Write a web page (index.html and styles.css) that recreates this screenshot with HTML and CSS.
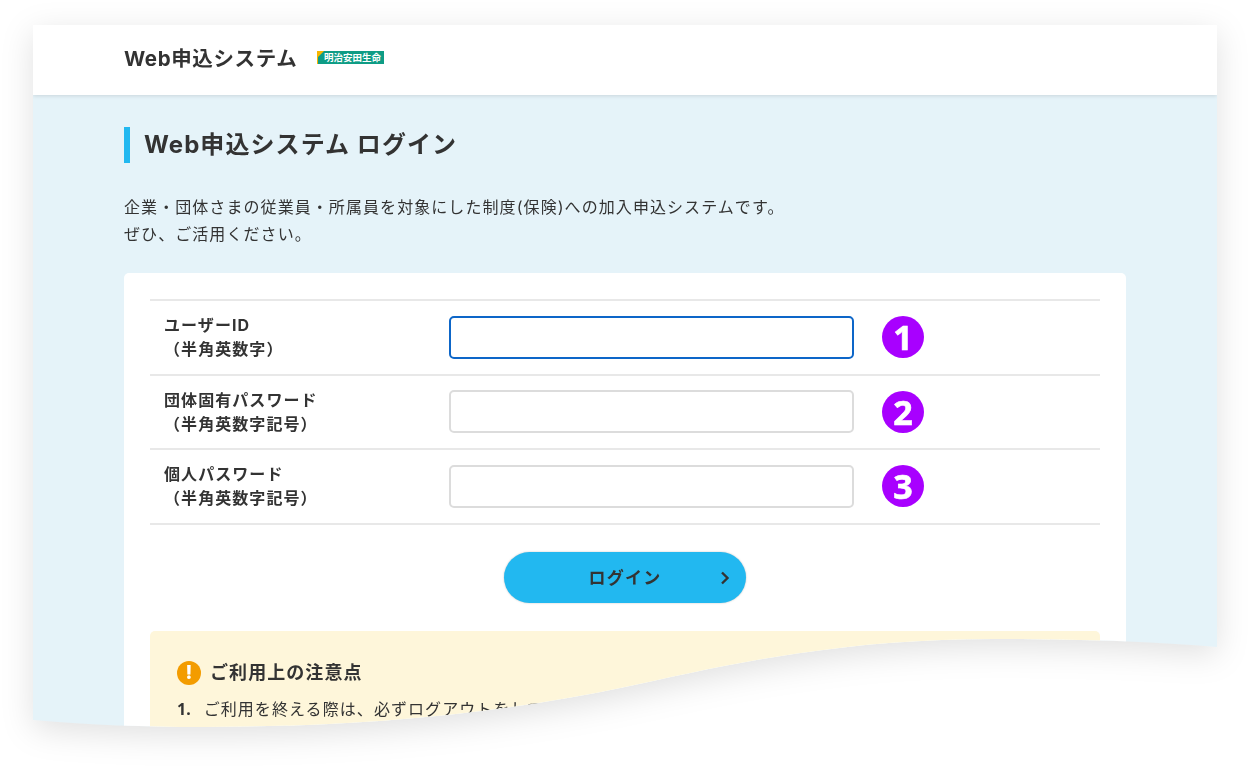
FILE: index.html
```html
<!DOCTYPE html>
<html lang="ja">
<head>
<meta charset="utf-8">
<title>Web申込システム ログイン</title>
<link rel="stylesheet" href="styles.css">
</head>
<body>
<div class="frame">
  <div class="sheet">
    <header class="topbar">
      <span class="brand">Web申込システム</span>
      <svg class="logo" width="67" height="13" viewBox="0 0 67 13">
        <rect width="67" height="13" fill="#0e9c85"/>
        <path d="M0 0H7L1 6V13H0Z" fill="#f7b500"/>
        <text x="7" y="10" class="logo-text">明治安田生命</text>
      </svg>
    </header>
    <main class="content">
      <h1 class="title">Web申込システム ログイン</h1>
      <p class="lead">企業・団体さまの従業員・所属員を対象にした制度(保険)への加入申込システムです。<br>ぜひ、ご活用ください。</p>
      <section class="card">
        <div class="rows">
          <div class="row">
            <label class="label">ユーザーID<br>（半角英数字）</label>
            <div class="input focused"></div>
            <span class="num">1</span>
          </div>
          <div class="row">
            <label class="label">団体固有パスワード<br>（半角英数字記号）</label>
            <div class="input"></div>
            <span class="num">2</span>
          </div>
          <div class="row">
            <label class="label">個人パスワード<br>（半角英数字記号）</label>
            <div class="input"></div>
            <span class="num">3</span>
          </div>
        </div>
        <div class="actions">
          <button class="login" type="button"><span class="login-text">ログイン</span>
            <svg class="chev" width="10" height="14" viewBox="0 0 10 14"><path d="M2 1.5L7.5 7L2 12.5" fill="none" stroke="#333" stroke-width="2.4"/></svg>
          </button>
        </div>
        <div class="notice">
          <h2 class="notice-title"><span class="bang">!</span>ご利用上の注意点</h2>
          <ol class="notice-list">
            <li><b class="marker">1.</b>ご利用を終える際は、必ずログアウトをしてください。</li>
          </ol>
        </div>
      </section>
    </main>
  </div>
</div>
</body>
</html>
```
FILE: styles.css
```css
* { box-sizing: border-box; }
html, body { margin: 0; height: 768px; overflow: hidden; background: #fff; }
body {
  font-family: Inter, "Noto Sans CJK JP", sans-serif;
  color: #333;
  letter-spacing: .067em;
}
.frame {
  width: 1184px;
  height: 710px;
  margin: 25px 0 0 33px;
  filter: drop-shadow(0 8px 16px rgba(0,0,0,.12));
}
.sheet {
  height: 710px;
  background: #e5f3f9;
  overflow: hidden;
  clip-path: path("M0 0H1184V622C1110 616 1040 614 960 614C840 614 740 629 620 656C470 690 320 702 170 702C110 702 60 700 0 695Z");
}
.topbar {
  height: 70px;
  background: #fff;
  box-shadow: 0 1px 4px rgba(0,0,0,.12);
  display: flex;
  align-items: center;
  padding: 0 0 6px 91px;
  gap: 20px;
  position: relative;
}
.brand { font-size: 20.5px; font-weight: 700; letter-spacing: .03em; }
.logo { display: block; margin-top: 1px; }
.logo-text { font-size: 9.5px; font-weight: 700; fill: #fff; letter-spacing: 0; }
.content { padding: 32px 91px 0; }
.title {
  margin: 0;
  height: 36px;
  border-left: 6px solid #22b8f0;
  padding-left: 14px;
  font-size: 24px;
  line-height: 36px;
  font-weight: 700;
}
.lead { margin: 31px 0 0; font-size: 16px; line-height: 27px; }
.card {
  margin-top: 25px;
  background: #fff;
  border-radius: 5px;
  padding: 26px 26px 0;
  height: 500px;
}
.rows { border-top: 2px solid #e8e8e8; }
.row {
  height: 74.5px;
  border-bottom: 2px solid #e8e8e8;
  display: flex;
  align-items: center;
  padding-left: 14px;
}
.label { width: 285px; font-size: 16px; line-height: 24px; font-weight: 700; }
.input {
  width: 405px;
  height: 43px;
  border: 2px solid #dcdcdc;
  border-radius: 5px;
  background: #fff;
}
.focused { border-color: #0d66c8; }
.num {
  width: 42px;
  height: 42px;
  margin-left: 28px;
  border-radius: 50%;
  background: #a800ff;
  color: #fff;
  display: flex;
  align-items: center;
  justify-content: center;
  font-family: "Open Sans", sans-serif;
  font-size: 34px;
  line-height: 42px;
  font-weight: 700;
  -webkit-text-stroke: .6px #fff;
  letter-spacing: 0;
}
.actions { display: flex; justify-content: center; margin-top: 27px; }
.login {
  width: 242px;
  height: 51px;
  border: 0;
  padding: 0 0 2px;
  border-radius: 26px;
  background: #22b8f0;
  box-shadow: 0 0 2px rgba(0,0,0,.25);
  font: 700 17px "Noto Sans CJK JP", sans-serif;
  letter-spacing: .07em;
  color: #333;
  position: relative;
}
.chev { position: absolute; right: 16px; top: 19px; }
.notice {
  margin-top: 28px;
  background: #fef6da;
  border-radius: 5px;
  padding: 27px 27px;
  height: 200px;
}
.notice-title {
  margin: 0;
  display: flex;
  align-items: center;
  gap: 9px;
  font-size: 18px;
  line-height: 30px;
  font-weight: 700;
}
.bang {
  width: 24px;
  height: 24px;
  border-radius: 50%;
  background: #f39c00;
  color: #fff;
  display: flex;
  align-items: center;
  justify-content: center;
  font-size: 19px;
  font-weight: 800;
  letter-spacing: 0;
}
.notice-list { list-style: none; margin: 8px 0 0; padding: 0; font-size: 16px; line-height: 27px; }
.marker { font-family: "Noto Sans", sans-serif; margin-right: 13px; letter-spacing: 0; }
```
